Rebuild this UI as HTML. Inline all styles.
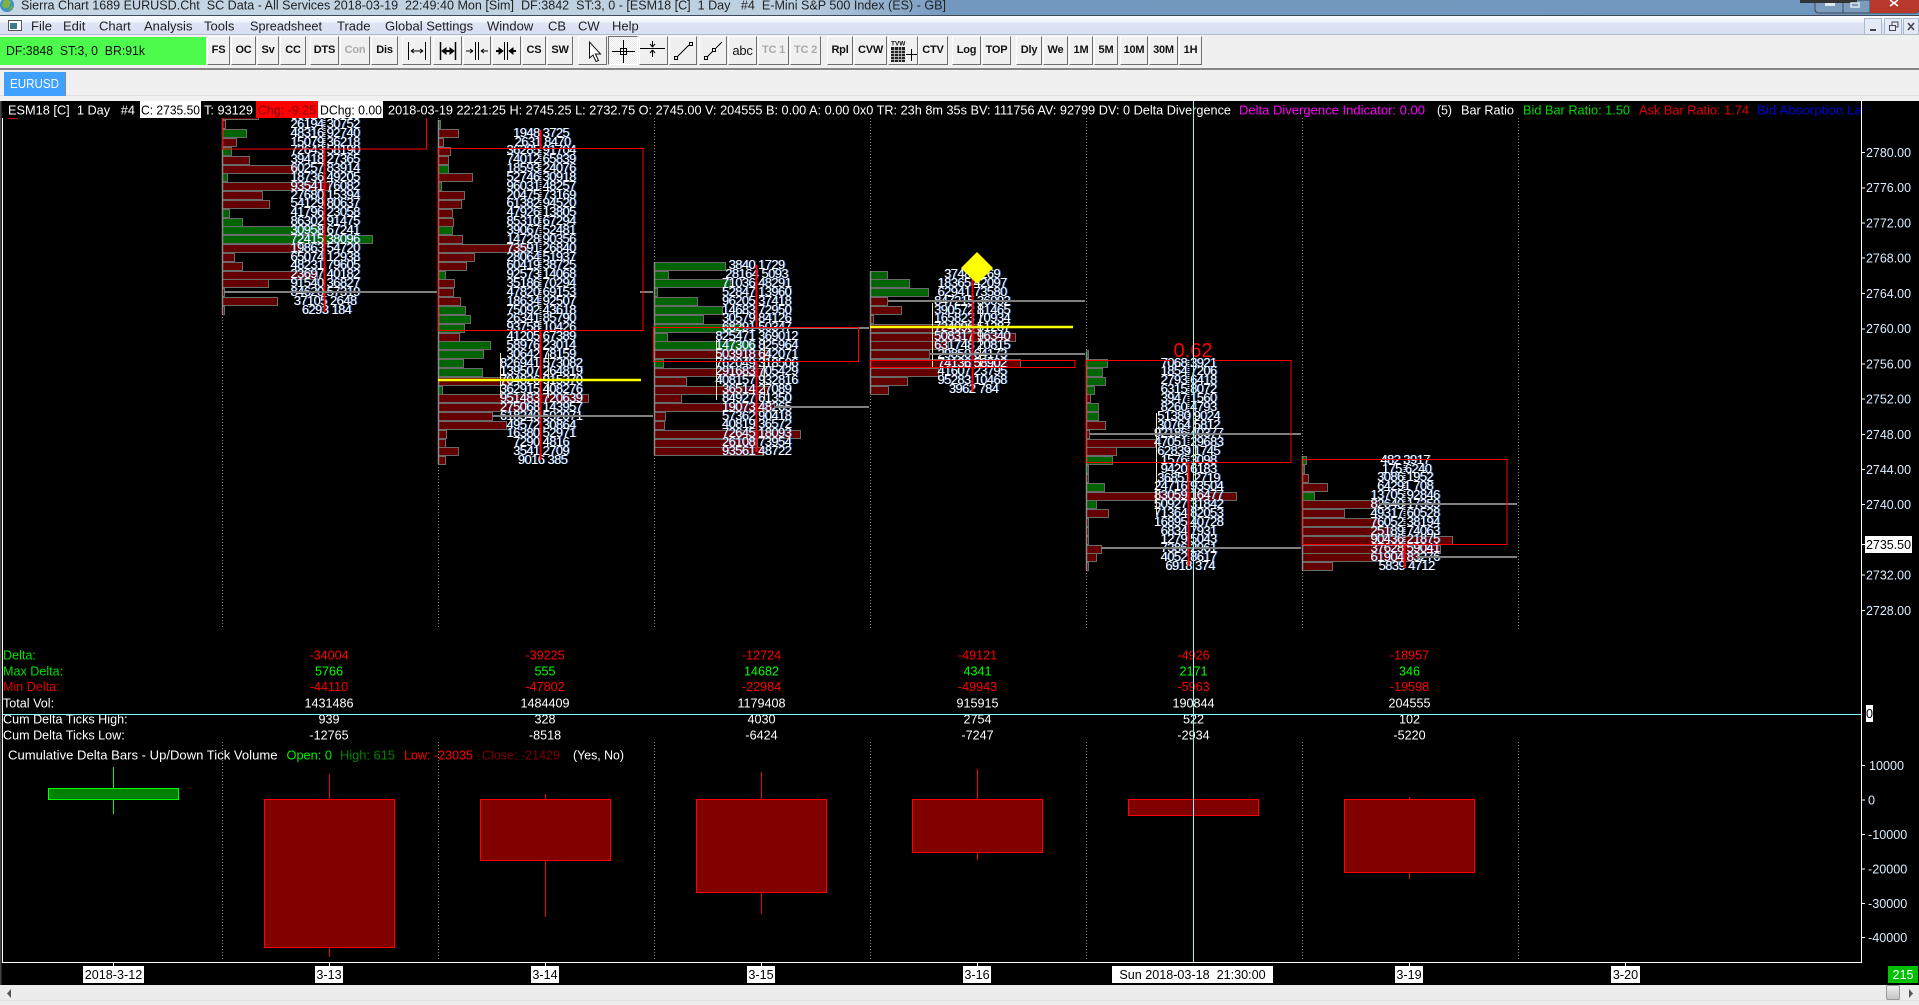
<!DOCTYPE html>
<html><head><meta charset="utf-8"><title>Sierra Chart</title>
<style>
html,body{margin:0;padding:0;background:#f0f0f0;width:1919px;height:1005px;overflow:hidden;font-family:"Liberation Sans",sans-serif}
#t{position:absolute;left:0;top:0;width:1919px;height:15px;background:linear-gradient(90deg,#c6d6e4 0,#bccfe0 800px,#7398bf 950px,#7097bd 100%)}
#tl{position:absolute;left:0;top:15px;width:1919px;height:1px;background:#3c4a5a}
#m{position:absolute;left:0;top:16px;width:1919px;height:19px;background:linear-gradient(#fbfcff 0,#f2f5fc 30%,#dfe5f5 40%,#d8dff2 100%);border-bottom:1px solid #b4bbd0;box-sizing:border-box}
#g{position:absolute;left:0;top:37px;width:206px;height:28px;background:#4dfb4d}
.b{position:absolute;top:36px;height:29px;box-sizing:border-box;background:#f0f0f0;border:1px solid;border-color:#fff #6f6f6f #6f6f6f #fff;font:700 11px/27px "Liberation Sans",sans-serif;letter-spacing:-.2px;text-align:center;color:#111}
.d{color:#aaa}
#sep{position:absolute;left:0;top:68px;width:1919px;height:2px;background:#868686}
#sep2{position:absolute;left:0;top:95px;width:1919px;height:1px;background:#e0e0e0}
#tab{position:absolute;left:4px;top:72px;width:62px;height:24px;background:#3ea0ff;border-right:1px solid #888;box-sizing:border-box}
#c{position:absolute;left:0;top:101px;width:1919px;height:884px;background:#000}
#sb{position:absolute;left:0;top:985px;width:1919px;height:20px;background:#ececec}
#sb i{position:absolute;left:0;top:15px;width:1919px;height:1px;background:#e0e0e0}
#th{position:absolute;left:1886px;top:0;width:14px;height:15px;background:linear-gradient(#eee,#c4c4c4);border:1px solid #9a9a9a;box-sizing:border-box;border-radius:2px}
svg{position:absolute;left:0;top:0}
pre{position:absolute;margin:0;width:120px;text-align:center;color:#fff;font:13px/8.84px "Liberation Sans",sans-serif;letter-spacing:-.6px;text-shadow:1px 0 0 rgba(70,140,255,.75)}
.tx text{font-family:"Liberation Sans",sans-serif;white-space:pre}
</style></head><body>
<div id="t"></div><div id="tl"></div><div id="m"></div><div id="g"></div>
<div class="b" style="left:207px;width:23px">FS</div><div class="b" style="left:231px;width:25px">OC</div><div class="b" style="left:257px;width:22px">Sv</div><div class="b" style="left:280px;width:26px">CC</div>
<div class="b" style="left:310px;width:29px">DTS</div><div class="b d" style="left:340px;width:30px">Con</div><div class="b" style="left:371px;width:27px">Dis</div>
<div class="b" style="left:402px;width:29px"></div><div class="b" style="left:433px;width:29px"></div><div class="b" style="left:463px;width:28px"></div><div class="b" style="left:492px;width:29px"></div>
<div class="b" style="left:522px;width:24px">CS</div><div class="b" style="left:547px;width:26px">SW</div>
<div class="b" style="left:578px;width:29px"></div>
<div class="b" style="left:608px;width:30px;border-color:#6f6f6f #fff #fff #6f6f6f;background:repeating-conic-gradient(#fff 0 25%,#e8e8e8 0 50%) 0 0/2px 2px"></div>
<div class="b" style="left:639px;width:29px"></div><div class="b" style="left:669px;width:28px"></div><div class="b" style="left:699px;width:28px"></div>
<div class="b" style="left:728px;width:29px;font:400 13px/27px 'Liberation Sans',sans-serif">abc</div>
<div class="b d" style="left:758px;width:31px">TC 1</div><div class="b d" style="left:790px;width:31px">TC 2</div>
<div class="b" style="left:827px;width:26px">Rpl</div><div class="b" style="left:854px;width:33px">CVW</div><div class="b" style="left:888px;width:30px"></div><div class="b" style="left:918px;width:30px">CTV</div>
<div class="b" style="left:952px;width:29px">Log</div><div class="b" style="left:982px;width:29px">TOP</div>
<div class="b" style="left:1016px;width:26px">Dly</div><div class="b" style="left:1043px;width:25px">We</div><div class="b" style="left:1069px;width:24px">1M</div><div class="b" style="left:1094px;width:24px">5M</div><div class="b" style="left:1120px;width:28px">10M</div><div class="b" style="left:1149px;width:29px">30M</div><div class="b" style="left:1179px;width:23px">1H</div>
<div id="sep"></div><div id="sep2"></div><div id="tab"></div>
<div id="c"></div>
<div id="sb"><i></i><div id="th"></div></div>

<svg width="1919" height="1005" viewBox="0 0 1919 1005">
<g fill="#640000" stroke="#6a6a6a">
<path d="M222.5 111.5h36v8h-36zM222.5 120.5h3v8h-3zM222.5 138.5h14v8h-14zM222.5 156.5h27v8h-27zM222.5 165.5h74v8h-74zM222.5 182.5h107v8h-107zM222.5 191.5h40v8h-40zM222.5 200.5h47v8h-47zM222.5 244.5h78v8h-78zM222.5 253.5h12v8h-12zM222.5 262.5h20v8h-20zM222.5 271.5h95v8h-95zM222.5 279.5h46v8h-46zM222.5 288.5h2v8h-2zM222.5 297.5h55v8h-55zM222.5 306.5h2v8h-2z"/>
<path d="M438.5 129.5h20v8h-20zM438.5 138.5h5v8h-5zM438.5 147.5h12v8h-12zM438.5 156.5h10v8h-10zM438.5 173.5h34v8h-34zM438.5 191.5h26v8h-26zM438.5 200.5h23v8h-23zM438.5 209.5h14v8h-14zM438.5 218.5h15v8h-15zM438.5 235.5h24v8h-24zM438.5 244.5h89v8h-89zM438.5 253.5h36v8h-36zM438.5 262.5h28v8h-28zM438.5 279.5h16v8h-16zM438.5 288.5h15v8h-15zM438.5 297.5h22v8h-22zM438.5 333.5h21v8h-21zM438.5 377.5h72v8h-72zM438.5 394.5h150v8h-150zM438.5 403.5h89v8h-89zM438.5 412.5h54v8h-54zM438.5 421.5h68v8h-68zM438.5 430.5h8v8h-8zM438.5 439.5h7v8h-7zM438.5 447.5h20v8h-20zM438.5 456.5h7v8h-7z"/>
<path d="M654.5 350.5h114v8h-114zM654.5 368.5h109v8h-109zM654.5 377.5h32v8h-32zM654.5 386.5h114v8h-114zM654.5 394.5h27v8h-27zM654.5 403.5h120v8h-120zM654.5 412.5h11v8h-11zM654.5 421.5h10v8h-10zM654.5 430.5h146v8h-146zM654.5 439.5h103v8h-103zM654.5 447.5h109v8h-109z"/>
<path d="M870.5 297.5h17v8h-17zM870.5 306.5h31v8h-31zM870.5 315.5h3v8h-3zM870.5 324.5h109v8h-109zM870.5 333.5h145v8h-145zM870.5 341.5h78v8h-78zM870.5 350.5h59v8h-59zM870.5 359.5h150v8h-150zM870.5 368.5h68v8h-68zM870.5 377.5h37v8h-37zM870.5 386.5h18v8h-18z"/>
<path d="M1086.5 394.5h4v8h-4zM1086.5 421.5h19v8h-19zM1086.5 430.5h3v8h-3zM1086.5 439.5h69v8h-69zM1086.5 447.5h30v8h-30zM1086.5 474.5h2v8h-2zM1086.5 492.5h150v8h-150zM1086.5 509.5h22v8h-22zM1086.5 518.5h2v8h-2zM1086.5 527.5h2v8h-2zM1086.5 536.5h2v8h-2zM1086.5 545.5h15v8h-15zM1086.5 553.5h10v8h-10zM1086.5 562.5h2v8h-2z"/>
<path d="M1302.5 474.5h6v8h-6zM1302.5 483.5h25v8h-25zM1302.5 500.5h77v8h-77zM1302.5 509.5h42v8h-42zM1302.5 518.5h77v8h-77zM1302.5 527.5h88v8h-88zM1302.5 536.5h150v8h-150zM1302.5 545.5h138v8h-138zM1302.5 553.5h115v8h-115zM1302.5 562.5h30v8h-30z"/>
</g>
<g fill="#006400" stroke="#6a6a6a">
<path d="M222.5 129.5h24v8h-24zM222.5 147.5h9v8h-9zM222.5 173.5h5v8h-5zM222.5 209.5h7v8h-7zM222.5 218.5h20v8h-20zM222.5 226.5h98v8h-98zM222.5 235.5h150v8h-150z"/>
<path d="M438.5 120.5h2v8h-2zM438.5 165.5h10v8h-10zM438.5 182.5h3v8h-3zM438.5 226.5h14v8h-14zM438.5 271.5h7v8h-7zM438.5 306.5h27v8h-27zM438.5 315.5h32v8h-32zM438.5 324.5h26v8h-26zM438.5 341.5h52v8h-52zM438.5 350.5h45v8h-45zM438.5 359.5h25v8h-25zM438.5 368.5h44v8h-44zM438.5 386.5h4v8h-4z"/>
<path d="M654.5 262.5h71v8h-71zM654.5 271.5h14v8h-14zM654.5 279.5h76v8h-76zM654.5 288.5h3v8h-3zM654.5 297.5h43v8h-43zM654.5 306.5h68v8h-68zM654.5 315.5h49v8h-49zM654.5 324.5h89v8h-89zM654.5 333.5h13v8h-13zM654.5 341.5h99v8h-99zM654.5 359.5h9v8h-9z"/>
<path d="M870.5 271.5h17v8h-17zM870.5 279.5h39v8h-39zM870.5 288.5h58v8h-58z"/>
<path d="M1086.5 350.5h2v8h-2zM1086.5 359.5h21v8h-21zM1086.5 368.5h16v8h-16zM1086.5 377.5h19v8h-19zM1086.5 386.5h8v8h-8zM1086.5 403.5h12v8h-12zM1086.5 412.5h12v8h-12zM1086.5 456.5h26v8h-26zM1086.5 465.5h2v8h-2zM1086.5 483.5h18v8h-18zM1086.5 500.5h10v8h-10z"/>
<path d="M1302.5 456.5h4v8h-4zM1302.5 465.5h2v8h-2zM1302.5 492.5h12v8h-12z"/>
</g>
<g stroke="#8a8a8a" stroke-width="1.5"><path d="M222.5 112V314M438.5 120V464M654.5 262V455M870.5 271V393M1086.5 352V570M1302.5 456V570"/></g>
</svg>

<pre style="left:265px;top:111px">35827 41963
26194 30752
48316 92740
15079 36218
72643 58190
39418 27365
60257 83914
18736 49205
93541 76082
27680 15394
54129 80637
41796 23058
86302 91475
30958 67241
72415 38096
19863 54720
65074 12938
48231 79605
23697 40182
91540 36827
84620 57319
37105 2648
 6293 184</pre>
<pre style="left:481px;top:128.7px">1948 3725
 2631 8470
36285 91704
74012 65839
18593 24076
52746 30918
96031 48257
20475 73169
61382 94520
47926 13805
85310 67294
39067 52481
14728 90356
73591 26840
28064 51937
60419 38725
92573 14068
35186 70294
47820 69153
18634 92507
75092 43618
26341 85790
93758 10426
41205 67389
58976 23014
30642 78159
826941 573082
139507 264819
704826 915370
362915 408276
951483 720639
275068 143957
618340 592071
49572 30864
16380 52971
7290 4816
3541 2709
 9016 385</pre>
<pre style="left:696.5px;top:261.3px">3840 1729
28164 5093
71036 48291
52847 13960
96205 37418
14683 72950
30579 84126
68291 50347
825471 369012
147306 825964
503918 642071
762049 318506
291683 705429
408157 932816
36514 27089
84927 61350
19073 48265
57362 90418
40819 36572
72645 18093
26108 73954
93561 48722</pre>
<pre style="left:912px;top:270.2px">3748 1269
18365 42097
62941 73580
847215 36092
390572 81465
165823 70934
724096 51287
508317 96340
631748 20815
29850 64173
74136 58902
41607 23795
95283 10468
 3962 784</pre>
<pre style="left:1128.5px;top:358.6px">7068 3921
1854 7206
2793 6418
6315 8072
3947 1560
8260 4793
51380 9024
30764 5812
92186 40377
47051 29683
62839 1745
1576 3098
9420 6183
36851 2719
24716 93504
83059 16477
50927 31842
71364 82053
16895 40728
6834 7931
1279 5043
7386 2961
4052 8617
 6918 374</pre>
<pre style="left:1345px;top:455.8px">482 3917
 175 6240
3086 1952
64291 708
13705 92846
82640 17359
49317 60528
76052 38194
25189 74063
90436 21875
37628 59041
61904 83276
 5839 4712</pre>

<svg width="1919" height="1005" viewBox="0 0 1919 1005" class="tx">
<path d="M500.5 353V398M548.5 353V398M716.5 340V400M764.5 340V400M932.5 303V367M980.5 303V367M1156.5 413V515M1195.5 413V515" stroke="#f3e9c0" fill="none"/>
<g fill="none" stroke-width="2">
<path d="M324.5 118V149M540.5 148V330M1188.5 360V462M1404.5 459V544" stroke="#d8d8e8" stroke-dasharray="1 1"/>
<path d="M324.5 149V312M540.5 130V148M540.5 330V460M756.5 265V328M756.5 361V452M972.5 275V360M972.5 367V392M1188.5 462V566M1404.5 544V568" stroke="#f00"/>
</g>
<g stroke="#808080" stroke-width="2" fill="none">
<path d="M224 292H437M492 416H653M744 328H869M774 407H869M888 301H1085M930 354H1085M1090 434H1301M1101 548H1301M1379 504H1517M1417 557H1517M640 292H653M640 416H653"/>
</g>
<path d="M438 380H641M870 327H1073" stroke="#ff0" stroke-width="2.4" fill="none"/>
<polygon points="977,252 993,268 977,284 961,268" fill="#ff0"/>
<g fill="none" stroke="#f00">
<path d="M222.5 118V149H426.5V118"/>
<rect x="438" y="148.5" width="205" height="182"/>
<rect x="653.5" y="327.5" width="205" height="34"/>
<rect x="870" y="360.5" width="205" height="7"/>
<path d="M1171 360.5H1086V462.5H1291V360.5H1214"/>
<rect x="1302" y="459.5" width="205" height="85"/>
</g>
<text x="1193" y="357" text-anchor="middle" font-size="20" fill="#f00">0.62</text>
<g stroke="#8a8a8a" stroke-dasharray="1 2" fill="none">
<path d="M222.5 314V629M438.5 464V629M654.5 455V629M870.5 393V629M1086.5 118V352M1086.5 570V629M1302.5 118V456M1302.5 570V629M1518.5 118V629M438.5 118V120M654.5 118V262M870.5 118V271"/>
<path d="M222.5 742V961M438.5 742V961M654.5 742V961M870.5 742V961M1086.5 742V961M1302.5 742V961M1518.5 742V961"/>
</g>
<rect x="3" y="101" width="1859" height="17" fill="#000"/>
<path d="M8 118.5H18" stroke="#c00"/>
<rect x="140" y="101" width="61" height="17" fill="#fff"/>
<rect x="256" y="101" width="62" height="17" fill="#f00"/>
<rect x="318" y="101" width="65" height="17" fill="#fff"/>
<g font-size="12.5">
<text x="8" y="114.5" fill="#fff" textLength="127" lengthAdjust="spacingAndGlyphs">ESM18 [C]  1 Day   #4</text>
<text x="141" y="114.5" fill="#000" textLength="59" lengthAdjust="spacingAndGlyphs">C: 2735.50</text>
<text x="204" y="114.5" fill="#fff" textLength="49" lengthAdjust="spacingAndGlyphs">T: 93129</text>
<text x="258" y="114.5" fill="#800000" textLength="58" lengthAdjust="spacingAndGlyphs">Chg: -9.25</text>
<text x="320" y="114.5" fill="#000" textLength="62" lengthAdjust="spacingAndGlyphs">DChg: 0.00</text>
<text x="388" y="114.5" fill="#fff" textLength="843" lengthAdjust="spacingAndGlyphs">2018-03-19 22:21:25 H: 2745.25 L: 2732.75 O: 2745.00 V: 204555 B: 0.00 A: 0.00 0x0 TR: 23h 8m 35s BV: 111756 AV: 92799 DV: 0 Delta Divergence</text>
<text x="1239" y="114.5" fill="#f0f" textLength="186" lengthAdjust="spacingAndGlyphs">Delta Divergence Indicator: 0.00</text>
<text x="1437" y="114.5" fill="#fff" textLength="15" lengthAdjust="spacingAndGlyphs">(5)</text>
<text x="1461" y="114.5" fill="#fff" textLength="53" lengthAdjust="spacingAndGlyphs">Bar Ratio</text>
<text x="1523" y="114.5" fill="#00d800" textLength="107" lengthAdjust="spacingAndGlyphs">Bid Bar Ratio: 1.50</text>
<text x="1639" y="114.5" fill="#e80000" textLength="110" lengthAdjust="spacingAndGlyphs">Ask Bar Ratio: 1.74</text>
<text x="1757" y="114.5" fill="#0000d8" textLength="105" lengthAdjust="spacingAndGlyphs">Bid Absorption La</text>
</g>
<path d="M113.5 767V814" stroke="#0f0" fill="none"/>
<rect x="48.5" y="788.5" width="130" height="11" fill="#008000" stroke="#0f0"/>
<g stroke="#f00" fill="none"><path d="M329.5 774V957M545.5 794V917M761.5 772V914M977.5 769V860M1193.5 798V816M1409.5 797V879"/></g>
<g fill="#800000" stroke="#f00" stroke-width="1">
<rect x="264.5" y="799.5" width="130" height="148"/>
<rect x="480.5" y="799.5" width="130" height="61"/>
<rect x="696.5" y="799.5" width="130" height="93"/>
<rect x="912.5" y="799.5" width="130" height="53"/>
<rect x="1128.5" y="799.5" width="130" height="16"/>
<rect x="1344.5" y="799.5" width="130" height="73"/>
</g>
<g font-size="12.6">
<text x="3" y="659.5" fill="#00e000">Delta:</text>
<text x="3" y="675.5" fill="#00e000">Max Delta:</text>
<text x="3" y="691" fill="#e00000">Min Delta:</text>
<text x="3" y="707.5" fill="#fff">Total Vol:</text>
<text x="3" y="723.5" fill="#fff">Cum Delta Ticks High:</text>
<text x="3" y="739.5" fill="#fff">Cum Delta Ticks Low:</text>
<g text-anchor="middle" fill="#f00">
<text x="329" y="659.5">-34004</text><text x="545" y="659.5">-39225</text><text x="761.5" y="659.5">-12724</text><text x="977.5" y="659.5">-49121</text><text x="1193.5" y="659.5">-4926</text><text x="1409.5" y="659.5">-18957</text>
<text x="329" y="691">-44110</text><text x="545" y="691">-47802</text><text x="761.5" y="691">-22984</text><text x="977.5" y="691">-49943</text><text x="1193.5" y="691">-5963</text><text x="1409.5" y="691">-19598</text>
</g>
<g text-anchor="middle" fill="#0f0">
<text x="329" y="675.5">5766</text><text x="545" y="675.5">555</text><text x="761.5" y="675.5">14682</text><text x="977.5" y="675.5">4341</text><text x="1193.5" y="675.5">2171</text><text x="1409.5" y="675.5">346</text>
</g>
<g text-anchor="middle" fill="#fff">
<text x="329" y="707.5">1431486</text><text x="545" y="707.5">1484409</text><text x="761.5" y="707.5">1179408</text><text x="977.5" y="707.5">915915</text><text x="1193.5" y="707.5">190844</text><text x="1409.5" y="707.5">204555</text>
<text x="329" y="723.5">939</text><text x="545" y="723.5">328</text><text x="761.5" y="723.5">4030</text><text x="977.5" y="723.5">2754</text><text x="1193.5" y="723.5">522</text><text x="1409.5" y="723.5">102</text>
<text x="329" y="739.5">-12765</text><text x="545" y="739.5">-8518</text><text x="761.5" y="739.5">-6424</text><text x="977.5" y="739.5">-7247</text><text x="1193.5" y="739.5">-2934</text><text x="1409.5" y="739.5">-5220</text>
</g>
<text x="8" y="759.5" fill="#fff" textLength="269.5" lengthAdjust="spacingAndGlyphs">Cumulative Delta Bars - Up/Down Tick Volume</text>
<text x="286.5" y="759.5" fill="#00f000" textLength="45.5" lengthAdjust="spacingAndGlyphs">Open: 0</text>
<text x="340" y="759.5" fill="#008000" textLength="55" lengthAdjust="spacingAndGlyphs">High: 615</text>
<text x="404" y="759.5" fill="#f00" textLength="69" lengthAdjust="spacingAndGlyphs">Low: -23035</text>
<text x="482" y="759.5" fill="#800000" textLength="78" lengthAdjust="spacingAndGlyphs">Close: -21429</text>
<text x="573" y="759.5" fill="#fff" textLength="51" lengthAdjust="spacingAndGlyphs">(Yes, No)</text>
</g>
<path d="M3 714.5H1862M1193.5 101V962" stroke="#7fffff" fill="none"/>
<path d="M1861.5 101V962.5H2.5V118" stroke="#fff" fill="none"/>
<path d="M0 101V985" stroke="#444" stroke-width="3" fill="none"/>
<path d="M1862 152.5h3M1862 188h3M1862 223h3M1862 258h3M1862 293.5h3M1862 329h3M1862 364h3M1862 399h3M1862 434.5h3M1862 469.5h3M1862 504.5h3M1862 544.5h3M1862 575h3M1862 610.5h3M1862 765.5h3M1862 800h3M1862 834.5h3M1862 869h3M1862 903.5h3M1862 937.5h3M113.5 963v3M329.5 963v3M545.5 963v3M761.5 963v3M977.5 963v3M1409.5 963v3M1625.5 963v3" stroke="#fff" fill="none"/>
<rect x="1865" y="536" width="47" height="17" fill="#fff"/>
<rect x="1866" y="705" width="7" height="17" fill="#fff"/>
<g font-size="12.6" fill="#dceeff">
<text x="1866" y="157" textLength="45" lengthAdjust="spacingAndGlyphs">2780.00</text>
<text x="1866" y="192" textLength="45" lengthAdjust="spacingAndGlyphs">2776.00</text>
<text x="1866" y="227.5" textLength="45" lengthAdjust="spacingAndGlyphs">2772.00</text>
<text x="1866" y="262.5" textLength="45" lengthAdjust="spacingAndGlyphs">2768.00</text>
<text x="1866" y="298" textLength="45" lengthAdjust="spacingAndGlyphs">2764.00</text>
<text x="1866" y="333" textLength="45" lengthAdjust="spacingAndGlyphs">2760.00</text>
<text x="1866" y="368.5" textLength="45" lengthAdjust="spacingAndGlyphs">2756.00</text>
<text x="1866" y="403.5" textLength="45" lengthAdjust="spacingAndGlyphs">2752.00</text>
<text x="1866" y="439" textLength="45" lengthAdjust="spacingAndGlyphs">2748.00</text>
<text x="1866" y="474" textLength="45" lengthAdjust="spacingAndGlyphs">2744.00</text>
<text x="1866" y="509" textLength="45" lengthAdjust="spacingAndGlyphs">2740.00</text>
<text x="1866" y="579.5" textLength="45" lengthAdjust="spacingAndGlyphs">2732.00</text>
<text x="1866" y="615" textLength="45" lengthAdjust="spacingAndGlyphs">2728.00</text>
<text x="1869" y="770">10000</text>
<text x="1868" y="804.5">0</text>
<text x="1868" y="839">-10000</text>
<text x="1868" y="873.5">-20000</text>
<text x="1868" y="908">-30000</text>
<text x="1868" y="942">-40000</text>
</g>
<g font-size="12.6" fill="#000">
<text x="1866" y="549" textLength="45" lengthAdjust="spacingAndGlyphs">2735.50</text>
<text x="1866" y="718">0</text>
</g>
<g fill="#fff">
<rect x="83" y="966" width="61" height="17"/><rect x="315" y="966" width="28" height="17"/><rect x="531" y="966" width="28" height="17"/><rect x="747" y="966" width="28" height="17"/><rect x="963" y="966" width="28" height="17"/><rect x="1112" y="966" width="161" height="17"/><rect x="1395" y="966" width="28" height="17"/><rect x="1611" y="966" width="29" height="17"/>
</g>
<rect x="1888" y="966" width="30" height="17" fill="#00c000"/>
<g font-size="12.6" fill="#000" text-anchor="middle">
<text x="113.5" y="979">2018-3-12</text><text x="329" y="979">3-13</text><text x="545" y="979">3-14</text><text x="761" y="979">3-15</text><text x="977" y="979">3-16</text><text x="1192.5" y="979">Sun 2018-03-18  21:30:00</text><text x="1409" y="979">3-19</text><text x="1625.5" y="979">3-20</text>
<text x="1903" y="979" fill="#fff">215</text>
</g>
<path d="M11 989v9l-4-4.5zM1909 989v9l4-4.5z" fill="#555"/>
<circle cx="7" cy="5" r="7" fill="#3f8fc8"/><path d="M3 1q5-3 8 1l-2 5-4 2-3-3z" fill="#7cb342"/><path d="M9 8l3-3 1 3-3 4z" fill="#6aa84f"/>
<text x="21" y="9.5" font-size="12.5" fill="#222" textLength="925" lengthAdjust="spacingAndGlyphs">Sierra Chart 1689 EURUSD.Cht  SC Data - All Services 2018-03-19  22:49:40 Mon [Sim]  DF:3842  ST:3, 0 - [ESM18 [C]  1 Day   #4  E-Mini S&amp;P 500 Index (ES) - GB]</text>
<path d="M1815 0v9q0 4 4 4h96q4 0 4-4V0z" fill="#7b9cbd" stroke="#3c4a5a"/>
<path d="M1843 0v13M1870 0v13" stroke="#3c4a5a" fill="none"/>
<path d="M1870 0h49v9q0 4-4 4h-45z" fill="#b8392b"/>
<rect x="1800" y="0" width="57" height="3" fill="#333"/>
<path d="M1825 3h10v3h-10z" fill="#dfe6f0"/><rect x="1851" y="3" width="8" height="4" fill="none" stroke="#dfe6f0" stroke-width="1.5"/>
<path d="M1890 0l4 3 4-3M1890 6l4-3 4 3" stroke="#fff" stroke-width="1.6" fill="none"/>
<g font-size="13" fill="#222">
<text x="31" y="30.5">File</text><text x="63" y="30.5">Edit</text><text x="99" y="30.5">Chart</text><text x="144" y="30.5">Analysis</text><text x="204" y="30.5">Tools</text><text x="250" y="30.5" textLength="72" lengthAdjust="spacingAndGlyphs">Spreadsheet</text><text x="337" y="30.5">Trade</text><text x="385" y="30.5">Global Settings</text><text x="487" y="30.5">Window</text><text x="548" y="30.5">CB</text><text x="578" y="30.5">CW</text><text x="612" y="30.5">Help</text>
</g>
<rect x="8.5" y="20.5" width="13" height="10" fill="#fff" stroke="#555"/><rect x="10" y="23" width="7" height="6" fill="#3a7a8a"/>
<g fill="#e4eaf6" stroke="#a9bccf"><rect x="1864.5" y="18.5" width="17" height="16"/><rect x="1884.5" y="18.5" width="17" height="16"/><rect x="1903.5" y="18.5" width="15" height="16"/></g>
<path d="M1870 30h6" stroke="#445" stroke-width="2"/><path d="M1889.5 25.5h6v5h-6zM1892 25v-3h6v5h-2" stroke="#445" fill="none"/><path d="M1908 23l6 7M1914 23l-6 7" stroke="#445" stroke-width="1.6"/>
<text x="6" y="55" font-size="13" fill="#111" textLength="139" lengthAdjust="spacingAndGlyphs">DF:3848  ST:3, 0  BR:91k</text>
<text x="10" y="88" font-size="12.5" fill="#fff" textLength="49" lengthAdjust="spacingAndGlyphs">EURUSD</text>
<g stroke="#000" fill="none">
<path d="M408.5 42V60M425.5 42V60M411 51H423M411 51l3-2M411 51l3 2M423 51l-3-2M423 51l-3 2"/>
<path d="M440.5 42V60M455.5 42V60" stroke-width="1.5"/><path d="M445 51H451" stroke-width="2"/><path d="M442 51l4-3v6zM454 51l-4-3v6z" fill="#000"/>
<path d="M475.5 42V60M478.5 42V60M466 51H473M473 51l-3-2M473 51l-3 2M488 51H481M481 51l3-2M481 51l3 2"/>
<path d="M504.5 42V60M507.5 42V60" /><path d="M496 51H500M516 51H512" stroke-width="2"/><path d="M503 51l-4-3v6zM509 51l4-3v6z" fill="#000"/>
<path d="M589.5 42V58l3.5-3 3 6.5 2.5-1-3-6.5h5z" stroke="#111" fill="#fff"/>
<path d="M612 51.5H635M623.5 40V63"/><rect x="620.5" y="48.5" width="6" height="6"/>
<path d="M640 48.5H665M652.5 41V46M652.5 47l-2.5-3M652.5 47l2.5-3M652.5 50V57M652.5 50l-2.5 3M652.5 50l2.5 3"/>
<path d="M677 57L689 45"/><rect x="674.5" y="56.5" width="3" height="3" /><rect x="689.5" y="42.5" width="3" height="3"/>
<path d="M707 57L713 51M716 48L722 42"/><rect x="704.5" y="56.5" width="3" height="3"/><rect x="712.5" y="48.5" width="3" height="3"/>
<path d="M906 54.5H917M911.5 49V61"/>
</g>
<rect x="891" y="47" width="14" height="15" fill="#222"/>
<path d="M891 50.5h14M891 53.5h14M891 56.5h14M891 59.5h14M894.5 47v15M898.5 47v15M901.5 47v15" stroke="#ddd" stroke-width=".7"/>
<text x="891" y="45.5" font-size="6.5" font-weight="700" fill="#111">TVW</text>
</svg>
</body></html>
